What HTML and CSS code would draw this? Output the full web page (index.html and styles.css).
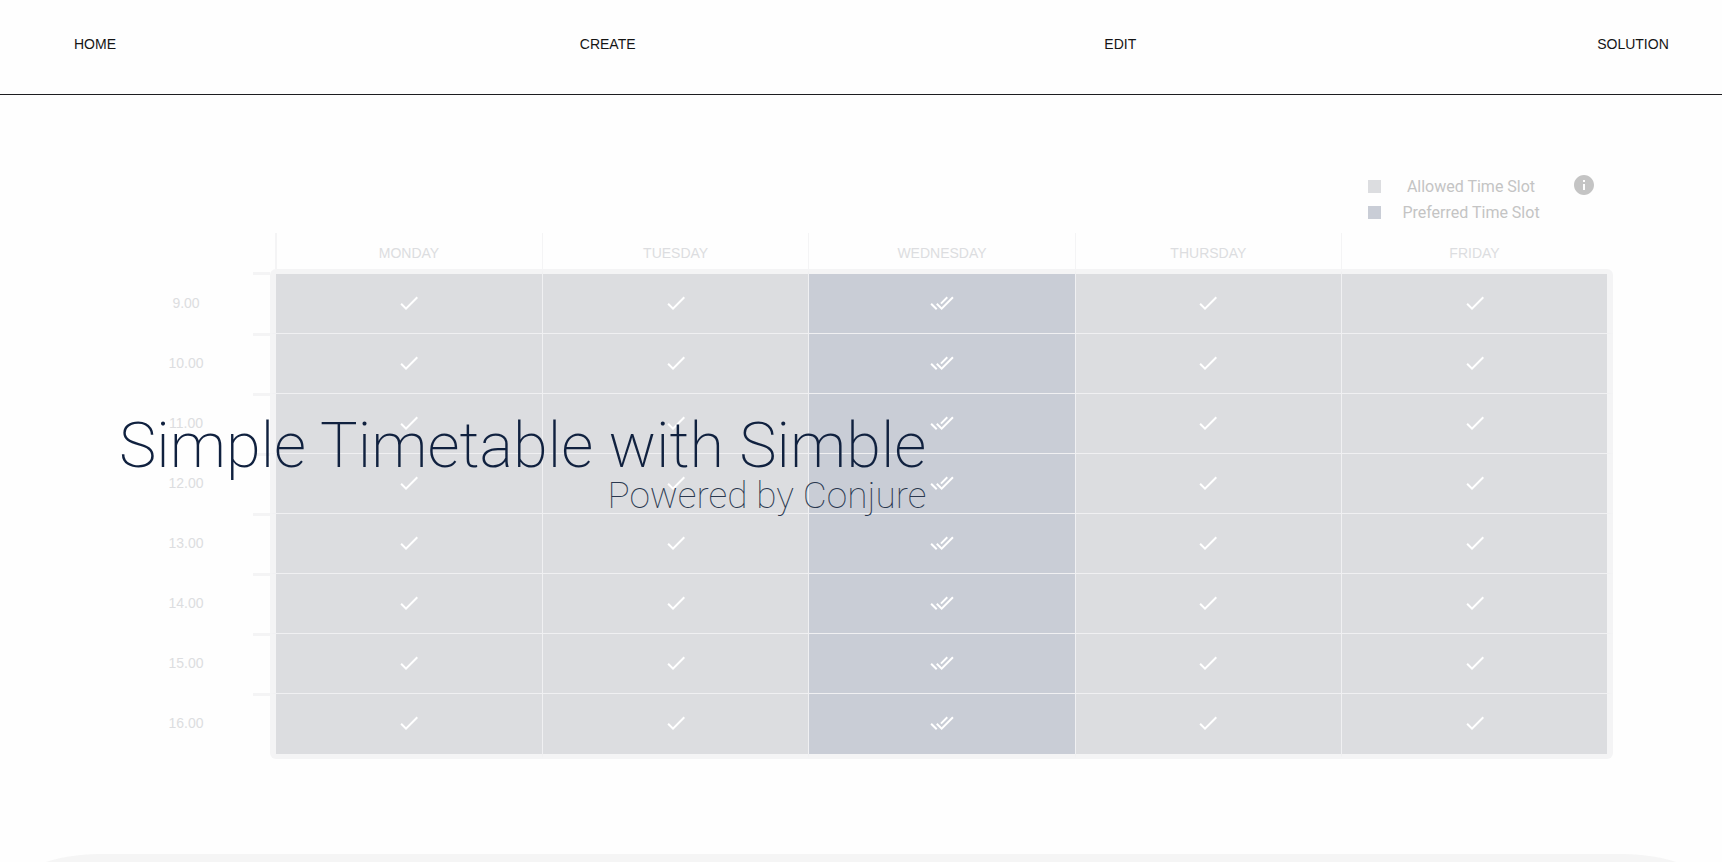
FILE: index.html
```html
<!DOCTYPE html>
<html lang="en">
<head>
<meta charset="utf-8">
<title>Simple Timetable with Simble</title>
<link rel="stylesheet" href="styles.css">
</head>
<body>
<svg class="sprite" aria-hidden="true">
  <symbol id="check" viewBox="0 0 24 24"><path d="M9 16.17 4.83 12l-1.42 1.41L9 19 21 7l-1.41-1.41z"/></symbol>
  <symbol id="double-check" viewBox="0 0 24 24"><path d="M18 7l-1.41-1.41-6.34 6.34 1.41 1.41L18 7zm4.24-1.41L11.66 16.17 7.48 12l-1.41 1.41L11.66 19l12-12-1.42-1.41zM.41 13.41 6 19l1.41-1.41L1.83 12 .41 13.41z"/></symbol>
  <symbol id="info" viewBox="0 0 24 24"><path d="M12 2C6.48 2 2 6.48 2 12s4.48 10 10 10 10-4.48 10-10S17.52 2 12 2zm1 15h-2v-6h2v6zm0-8h-2V7h2v2z"/></symbol>
</svg>
<header class="topbar">
  <nav class="nav">
    <a class="nav-link" href="#home">HOME</a>
    <a class="nav-link" href="#create">CREATE</a>
    <a class="nav-link" href="#edit">EDIT</a>
    <a class="nav-link" href="#solution">SOLUTION</a>
  </nav>
</header>
<main class="main">
  <div class="legend">
    <ul class="legend-list">
      <li class="legend-item"><span class="swatch"></span><span class="legend-text">Allowed Time Slot</span></li>
      <li class="legend-item"><span class="swatch swatch-preferred"></span><span class="legend-text">Preferred Time Slot</span></li>
    </ul>
    <button class="info" aria-label="Information"><svg class="icon"><use href="#info"/></svg></button>
  </div>
  <table class="timetable">
    <colgroup><col class="col-time"><col class="col-edge"><col><col><col><col class="col-edge"></colgroup>
    <thead>
      <tr><td></td><th scope="col">MONDAY</th><th scope="col">TUESDAY</th><th scope="col">WEDNESDAY</th><th scope="col">THURSDAY</th><th scope="col">FRIDAY</th></tr>
    </thead>
    <tbody>
      <tr>
        <th scope="row">9.00</th>
        <td><button class="slot" aria-label="Allowed"><svg class="icon"><use href="#check"/></svg></button></td>
        <td><button class="slot" aria-label="Allowed"><svg class="icon"><use href="#check"/></svg></button></td>
        <td class="preferred"><button class="slot" aria-label="Preferred"><svg class="icon"><use href="#double-check"/></svg></button></td>
        <td><button class="slot" aria-label="Allowed"><svg class="icon"><use href="#check"/></svg></button></td>
        <td><button class="slot" aria-label="Allowed"><svg class="icon"><use href="#check"/></svg></button></td>
      </tr>
      <tr>
        <th scope="row">10.00</th>
        <td><button class="slot" aria-label="Allowed"><svg class="icon"><use href="#check"/></svg></button></td>
        <td><button class="slot" aria-label="Allowed"><svg class="icon"><use href="#check"/></svg></button></td>
        <td class="preferred"><button class="slot" aria-label="Preferred"><svg class="icon"><use href="#double-check"/></svg></button></td>
        <td><button class="slot" aria-label="Allowed"><svg class="icon"><use href="#check"/></svg></button></td>
        <td><button class="slot" aria-label="Allowed"><svg class="icon"><use href="#check"/></svg></button></td>
      </tr>
      <tr>
        <th scope="row">11.00</th>
        <td><button class="slot" aria-label="Allowed"><svg class="icon"><use href="#check"/></svg></button></td>
        <td><button class="slot" aria-label="Allowed"><svg class="icon"><use href="#check"/></svg></button></td>
        <td class="preferred"><button class="slot" aria-label="Preferred"><svg class="icon"><use href="#double-check"/></svg></button></td>
        <td><button class="slot" aria-label="Allowed"><svg class="icon"><use href="#check"/></svg></button></td>
        <td><button class="slot" aria-label="Allowed"><svg class="icon"><use href="#check"/></svg></button></td>
      </tr>
      <tr>
        <th scope="row">12.00</th>
        <td><button class="slot" aria-label="Allowed"><svg class="icon"><use href="#check"/></svg></button></td>
        <td><button class="slot" aria-label="Allowed"><svg class="icon"><use href="#check"/></svg></button></td>
        <td class="preferred"><button class="slot" aria-label="Preferred"><svg class="icon"><use href="#double-check"/></svg></button></td>
        <td><button class="slot" aria-label="Allowed"><svg class="icon"><use href="#check"/></svg></button></td>
        <td><button class="slot" aria-label="Allowed"><svg class="icon"><use href="#check"/></svg></button></td>
      </tr>
      <tr>
        <th scope="row">13.00</th>
        <td><button class="slot" aria-label="Allowed"><svg class="icon"><use href="#check"/></svg></button></td>
        <td><button class="slot" aria-label="Allowed"><svg class="icon"><use href="#check"/></svg></button></td>
        <td class="preferred"><button class="slot" aria-label="Preferred"><svg class="icon"><use href="#double-check"/></svg></button></td>
        <td><button class="slot" aria-label="Allowed"><svg class="icon"><use href="#check"/></svg></button></td>
        <td><button class="slot" aria-label="Allowed"><svg class="icon"><use href="#check"/></svg></button></td>
      </tr>
      <tr>
        <th scope="row">14.00</th>
        <td><button class="slot" aria-label="Allowed"><svg class="icon"><use href="#check"/></svg></button></td>
        <td><button class="slot" aria-label="Allowed"><svg class="icon"><use href="#check"/></svg></button></td>
        <td class="preferred"><button class="slot" aria-label="Preferred"><svg class="icon"><use href="#double-check"/></svg></button></td>
        <td><button class="slot" aria-label="Allowed"><svg class="icon"><use href="#check"/></svg></button></td>
        <td><button class="slot" aria-label="Allowed"><svg class="icon"><use href="#check"/></svg></button></td>
      </tr>
      <tr>
        <th scope="row">15.00</th>
        <td><button class="slot" aria-label="Allowed"><svg class="icon"><use href="#check"/></svg></button></td>
        <td><button class="slot" aria-label="Allowed"><svg class="icon"><use href="#check"/></svg></button></td>
        <td class="preferred"><button class="slot" aria-label="Preferred"><svg class="icon"><use href="#double-check"/></svg></button></td>
        <td><button class="slot" aria-label="Allowed"><svg class="icon"><use href="#check"/></svg></button></td>
        <td><button class="slot" aria-label="Allowed"><svg class="icon"><use href="#check"/></svg></button></td>
      </tr>
      <tr>
        <th scope="row">16.00</th>
        <td><button class="slot" aria-label="Allowed"><svg class="icon"><use href="#check"/></svg></button></td>
        <td><button class="slot" aria-label="Allowed"><svg class="icon"><use href="#check"/></svg></button></td>
        <td class="preferred"><button class="slot" aria-label="Preferred"><svg class="icon"><use href="#double-check"/></svg></button></td>
        <td><button class="slot" aria-label="Allowed"><svg class="icon"><use href="#check"/></svg></button></td>
        <td><button class="slot" aria-label="Allowed"><svg class="icon"><use href="#check"/></svg></button></td>
      </tr>
    </tbody>
  </table>
  <div class="hero">
    <h1 class="hero-title">Simple Timetable with Simble</h1>
    <p class="hero-subtitle">Powered by Conjure</p>
  </div>
</main>
<section class="panel"></section>
</body>
</html>
```
FILE: styles.css
```css
* {
  box-sizing: border-box;
}

body {
  display: flex;
  flex-direction: column;
  height: 100vh;
  margin: 0;
  overflow: hidden;
  background: #fefefe;
  font-family: "Liberation Sans", Arial, sans-serif;
  font-size: 14px;
}

.sprite {
  position: absolute;
  width: 0;
  height: 0;
}

.icon {
  display: block;
  width: 24px;
  height: 24px;
  fill: currentColor;
  overflow: visible;
}

.topbar {
  flex: none;
  border-bottom: 1px solid #1d1d20;
}

.nav {
  display: flex;
  justify-content: space-between;
  padding: 34px 44px 40px 50px;
}

.nav-link {
  width: 90px;
  color: #151515;
  line-height: 20px;
  text-align: center;
  text-decoration: none;
}

/* Timetable page */

.main {
  position: relative;
  flex: none;
  padding: 78px 109px 95px 102px;
}

.legend {
  display: flex;
  justify-content: flex-end;
  gap: 31px;
  margin: 0 17px 8px 0;
  color: #c4c4c4;
}

.legend-list {
  margin: 0;
  padding: 0;
  list-style: none;
}

.legend-item {
  display: flex;
  align-items: center;
  gap: 20px;
  height: 26px;
  font-family: Roboto, sans-serif;
  font-size: 16px;
}

.legend-text {
  flex: 1;
  min-width: 140px;
  text-align: center;
}

.swatch {
  width: 13px;
  height: 13px;
  background: #dcdde0;
}

.swatch-preferred {
  background: #c9cdd6;
}

.info {
  height: 24px;
  padding: 0;
  border: 0;
  background: none;
  color: inherit;
}

.timetable {
  width: 100%;
  table-layout: fixed;
  border-collapse: separate;
  border-spacing: 0;
}

.col-time {
  width: 168px;
}

.col-edge {
  width: 18%;
}

.timetable th,
.timetable td {
  padding: 0;
  color: #dcdde0;
  font-weight: 400;
  text-align: center;
}

.timetable thead th {
  height: 36px;
  padding-top: 4px;
  border-left: 1px solid #f4f4f5;
}

.timetable thead th:nth-child(2) {
  padding-left: 6px;
  border-left: 0;
  background: linear-gradient(#f4f4f5, #f4f4f5) 5px 0 / 2px 100% no-repeat;
}

.timetable thead th:last-child {
  padding-right: 6px;
}

.timetable tbody th {
  background: linear-gradient(#f4f4f5, #f4f4f5) right top / 17px 3px no-repeat;
}

.timetable tbody tr:first-child th {
  padding-top: 4px;
  background-position: right 3px;
}

.timetable tbody tr:last-child th {
  padding-bottom: 6px;
}

.timetable tbody td {
  height: 60px;
  border-top: 1px solid #f0f0f2;
  border-left: 1px solid #f0f0f2;
  background: #dcdde0;
}

.timetable tbody td.preferred {
  background: #c9cdd6;
}

.timetable tbody td:nth-child(2) {
  border-left: 6px solid #f4f4f5;
}

.timetable tbody td:last-child {
  border-right: 6px solid #f4f4f5;
}

.timetable tbody tr:first-child td {
  height: 64px;
  border-top: 5px solid #f4f4f5;
}

.timetable tbody tr:last-child td {
  height: 66px;
  border-bottom: 5px solid #f4f4f5;
}

.timetable tbody tr:first-child td:nth-child(2) {
  border-top-left-radius: 6px;
}

.timetable tbody tr:first-child td:last-child {
  border-top-right-radius: 6px;
}

.timetable tbody tr:last-child td:nth-child(2) {
  border-bottom-left-radius: 6px;
}

.timetable tbody tr:last-child td:last-child {
  border-bottom-right-radius: 6px;
}

.slot {
  display: block;
  width: 100%;
  padding: 16px 0 18px;
  border: 0;
  background: none;
  color: #fff;
}

.slot .icon {
  margin: 0 auto;
}

/* Title laid over the timetable */

.hero {
  position: absolute;
  top: 315px;
  left: 119px;
  color: #10213f;
  font-family: Roboto, sans-serif;
  text-align: right;
}

.hero-title {
  margin: 0;
  font-size: 63px;
  font-weight: 200;
  line-height: 72px;
  white-space: nowrap;
}

.hero-subtitle {
  margin: 0;
  color: #2a384f;
  font-size: 37px;
  font-weight: 100;
  line-height: 28px;
}

.panel {
  flex: 1;
  background: #f5f5f5;
  min-height: 100px;
  border-radius: 100px 100px 0 0 / 50px 50px 0 0;
}
```
